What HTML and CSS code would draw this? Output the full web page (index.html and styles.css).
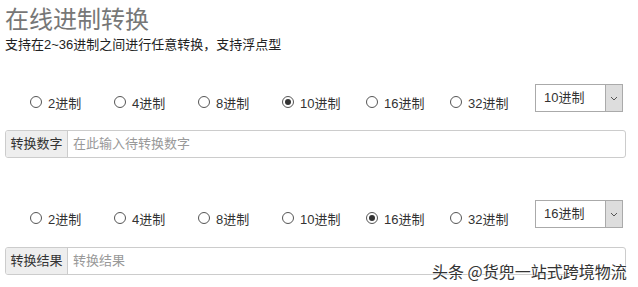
FILE: index.html
```html
<!DOCTYPE html>
<html lang="zh-CN">
<head>
<meta charset="utf-8">
<title>在线进制转换</title>
<link rel="stylesheet" href="styles.css">
</head>
<body>
<div class="page">
  <h1 class="title">在线进制转换</h1>
  <p class="subtitle">支持在2~36进制之间进行任意转换，支持浮点型</p>

  <div class="radio-row">
    <div class="radios">
      <label class="radio"><span class="dot"></span>2进制</label>
      <label class="radio"><span class="dot"></span>4进制</label>
      <label class="radio"><span class="dot"></span>8进制</label>
      <label class="radio"><span class="dot checked"></span>10进制</label>
      <label class="radio"><span class="dot"></span>16进制</label>
      <label class="radio"><span class="dot"></span>32进制</label>
    </div>
    <div class="select"><span class="select-text">10进制</span><span class="select-arrow"><svg width="8" height="5" viewBox="0 0 8 5"><path d="M1 1 L4 4 L7 1" fill="none" stroke="#555" stroke-width="1"/></svg></span></div>
  </div>

  <div class="input-group">
    <span class="addon">转换数字</span>
    <span class="field placeholder">在此输入待转换数字</span>
  </div>

  <div class="radio-row second">
    <div class="radios">
      <label class="radio"><span class="dot"></span>2进制</label>
      <label class="radio"><span class="dot"></span>4进制</label>
      <label class="radio"><span class="dot"></span>8进制</label>
      <label class="radio"><span class="dot"></span>10进制</label>
      <label class="radio"><span class="dot checked"></span>16进制</label>
      <label class="radio"><span class="dot"></span>32进制</label>
    </div>
    <div class="select"><span class="select-text">16进制</span><span class="select-arrow"><svg width="8" height="5" viewBox="0 0 8 5"><path d="M1 1 L4 4 L7 1" fill="none" stroke="#555" stroke-width="1"/></svg></span></div>
  </div>

  <div class="input-group second-input">
    <span class="addon">转换结果</span>
    <span class="field placeholder">转换结果</span>
  </div>

  <div class="watermark">头条 @货兜一站式跨境物流</div>
</div>
</body>
</html>
```

FILE: styles.css
```css
html, body {
  margin: 0;
  padding: 0;
  background: #fff;
}
body {
  font-family: "Liberation Sans", "Noto Sans CJK SC", sans-serif;
  color: #333;
  width: 638px;
  height: 287px;
  overflow: hidden;
}
.page {
  position: relative;
  padding: 0 12px 0 5px;
  height: 287px;
}
.title {
  margin: 0;
  font-size: 24px;
  line-height: 35px;
  font-weight: normal;
  color: #777;
  font-family: "Noto Sans CJK SC", sans-serif;
}
.subtitle {
  margin: 1px 0 0;
  font-size: 13px;
  line-height: 18px;
  color: #222;
}
.radio-row {
  display: flex;
  align-items: flex-start;
  margin-top: 30px;
  height: 28px;
}
.radio-row.second {
  margin-top: 42px;
}
.radios {
  display: flex;
  padding-left: 25px;
  padding-top: 4px;
}
.radio {
  display: flex;
  align-items: center;
  width: 84px;
  height: 28px;
  font-size: 13px;
  color: #333;
}
.dot {
  box-sizing: border-box;
  width: 12px;
  height: 12px;
  border: 1px solid #555;
  border-radius: 50%;
  margin-right: 6px;
  display: flex;
  align-items: center;
  justify-content: center;
}
.dot.checked::after {
  content: "";
  width: 6px;
  height: 6px;
  border-radius: 50%;
  background: #333;
}
.select {
  box-sizing: border-box;
  display: flex;
  width: 88px;
  height: 28px;
  margin-left: 1px;
  border: 1px solid #aaa;
  background: #fff;
}
.select-text {
  flex: 1;
  font-size: 13px;
  line-height: 26px;
  padding-left: 8px;
  color: #333;
}
.select-arrow {
  width: 16px;
  background: #ddd;
  border-left: 1px solid #aaa;
  display: flex;
  align-items: center;
  justify-content: center;
}
.input-group {
  box-sizing: border-box;
  display: flex;
  height: 28px;
  margin-top: 18px;
  border: 1px solid #ccc;
  border-radius: 3px;
  overflow: hidden;
}
.input-group.second-input {
  margin-top: 19px;
}
.addon {
  box-sizing: border-box;
  width: 62px;
  background: #eee;
  border-right: 1px solid #ccc;
  font-size: 13px;
  line-height: 26px;
  text-align: center;
  color: #333;
}
.field {
  flex: 1;
  font-size: 13px;
  line-height: 26px;
  padding-left: 5px;
}
.placeholder {
  color: #999;
}
.watermark {
  position: absolute;
  left: 432px;
  top: 261px;
  font-size: 16px;
  line-height: 20px;
  color: #333;
  font-family: "Noto Sans CJK SC", sans-serif;
  text-shadow: 0 0 2px #fff, 0 0 2px #fff, 0 0 1px #fff;
  white-space: nowrap;
}
```
